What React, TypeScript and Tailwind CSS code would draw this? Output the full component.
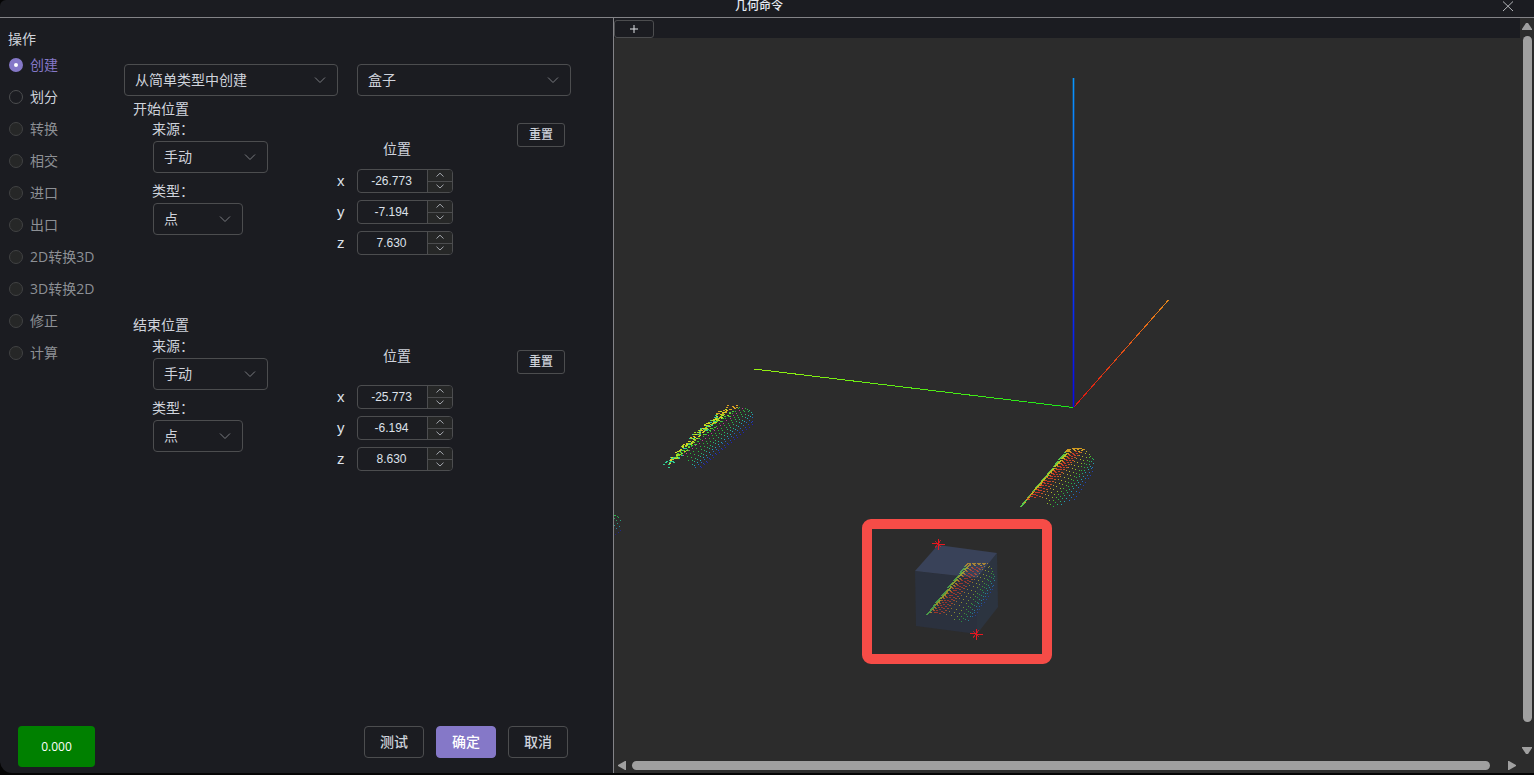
import { useState } from "react";
import type { ReactNode } from "react";

const FONT = 'font-["Open_Sans","Noto_Sans_CJK_SC",sans-serif]';

const OPERATIONS = [
  { id: "create", label: "创建", enabled: true },
  { id: "divide", label: "划分", enabled: true },
  { id: "convert", label: "转换", enabled: false },
  { id: "intersect", label: "相交", enabled: false },
  { id: "import", label: "进口", enabled: false },
  { id: "export", label: "出口", enabled: false },
  { id: "to3d", label: "2D转换3D", enabled: false },
  { id: "to2d", label: "3D转换2D", enabled: false },
  { id: "fix", label: "修正", enabled: false },
  { id: "compute", label: "计算", enabled: false },
];

function Select({ id, label, options, className }: { id: string; label?: string; options: string[]; className: string }) {
  return (
    <div className={`relative ${className}`}>
      <select
        id={id}
        aria-label={label}
        className="h-8 w-full appearance-none rounded border border-[#4c4d4f] bg-transparent pr-8 pl-2.5 text-sm text-[#cfd3dc] outline-none"
      >
        {options.map((o) => (
          <option key={o}>{o}</option>
        ))}
      </select>
      <svg className="pointer-events-none absolute top-[9px] right-[11px] size-[14px]" viewBox="0 0 14 14" fill="none" stroke="#797b80" aria-hidden="true">
        <path d="M2 4.5 7 9.5 12 4.5" />
      </svg>
    </div>
  );
}

function NumberField({ id, axis, value }: { id: string; axis: string; value: string }) {
  const [text, setText] = useState(value);
  const step = (by: number) => setText((Number(text) + by).toFixed(3));
  return (
    <div className="flex items-center">
      <label htmlFor={id} className="w-5 font-['Liberation_Sans',Arial,sans-serif] text-[15px] leading-6 text-[#dde1ea]">
        {axis}
      </label>
      <div className="flex h-6 w-24 overflow-hidden rounded border border-[#4c4d4f]">
        <input
          id={id}
          value={text}
          onChange={(e) => setText(e.target.value)}
          className="min-w-0 flex-1 bg-transparent pr-0.5 text-center font-['Liberation_Sans',Arial,sans-serif] text-xs text-[#dde1ea] outline-none"
        />
        <div className="flex w-[25px] flex-col border-l border-[#4c4d4f] bg-[#262727]">
          <button type="button" aria-label={`${axis} +`} onClick={() => step(1)} className="flex flex-1 items-center justify-center">
            <svg width="10" height="6" viewBox="0 0 10 6" fill="none" stroke="#a3a6ad">
              <path d="M1.5 4.5 5 1.2 8.5 4.5" />
            </svg>
          </button>
          <button type="button" aria-label={`${axis} -`} onClick={() => step(-1)} className="flex flex-1 items-center justify-center border-t border-[#4c4d4f]">
            <svg width="10" height="6" viewBox="0 0 10 6" fill="none" stroke="#a3a6ad">
              <path d="M1.5 0.7 5 4 8.5 0.7" />
            </svg>
          </button>
        </div>
      </div>
    </div>
  );
}

function PositionSection({ id, title, values, raised }: { id: string; title: string; values: string[]; raised?: boolean }) {
  return (
    <section className="h-[217px] pl-[9px]">
      <h2 className={`h-[21px] text-sm ${raised ? "leading-5" : "leading-[21px]"}`}>{title}</h2>
      <div className="flex items-start pl-5">
        <div className="w-[184px]">
          <label htmlFor={`${id}-source`} className="-ml-px mb-0.5 block h-5 text-sm leading-5">来源：</label>
          <Select id={`${id}-source`} options={["手动"]} className="w-[115px]" />
          <label htmlFor={`${id}-type`} className="mt-2 mb-0.5 -ml-px block h-5 text-sm leading-5">类型：</label>
          <Select id={`${id}-type`} options={["点"]} className="w-[90px]" />
        </div>
        <div className={raised ? "pt-2.5" : "pt-5"}>
          <div className={`pl-[46px] text-sm leading-5 ${raised ? "mb-[19px]" : "mb-2.5"}`}>位置</div>
          <div className="flex flex-col gap-[7px]">
            {["x", "y", "z"].map((axis, i) => (
              <NumberField key={axis} id={`${id}-${axis}`} axis={axis} value={values[i]} />
            ))}
          </div>
        </div>
        <button
          type="button"
          className={`ml-16 h-6 w-12 rounded-[3px] border border-[#4c4d4f] text-xs leading-[22px] font-medium text-[#cfd3dc] ${raised ? "mt-3.5" : "mt-1"}`}
        >
          重置
        </button>
      </div>
    </section>
  );
}

function ActionButton({ children, primary }: { children: ReactNode; primary?: boolean }) {
  return (
    <button
      type="button"
      className={`h-8 w-[60px] rounded border text-sm leading-[30px] font-medium ${
        primary ? "border-[#8578c8] bg-[#8578c8] text-white" : "border-[#4c4d4f] text-[#cfd3dc]"
      }`}
    >
      {children}
    </button>
  );
}

type Pt = [number, number];
type Shell = { front: Pt[]; back: Pt[]; colors: string[]; jitter: number; dense: number; bend: number };

const WARM = ["#60e050", "#d0e020", "#f0b020", "#f07020", "#e84020", "#e03828", "#e04028", "#e05828", "#e0a028", "#d8d028", "#a8d828", "#50d830", "#28d040", "#20d080", "#20b8d0", "#2080e0", "#2048d0"];
const COOL = ["#30e0a0", "#a8f020", "#f0f020", "#f8d818", "#d0f028", "#90e828", "#40e038", "#30c840", "#d838a8", "#28c838", "#28d048", "#28d070", "#20c8a0", "#20b8d0", "#2070d0", "#2040d0", "#2020c8"];

const SHELLS: Shell[] = [
  {
    front: [[665, 466], [668, 460], [674, 456], [683, 455], [690, 461], [693, 467], [701, 467]],
    back: [[721, 411], [728, 406], [735, 405], [742, 408], [749, 409], [752, 415], [752, 424]],
    colors: COOL, jitter: 4, dense: 7, bend: 1,
  },
  {
    front: [[1020, 506], [1025, 500], [1031, 497], [1042, 497], [1048, 505], [1057, 506], [1074, 499]],
    back: [[1067, 449], [1073, 448], [1079, 448], [1084, 449], [1090, 455], [1093, 460], [1092, 471]],
    colors: WARM, jitter: 0, dense: 8, bend: 0,
  },
  {
    front: [[926, 614], [931, 611], [936, 613], [946, 614], [957, 621], [965, 621], [975, 615]],
    back: [[967, 563], [973, 563], [980, 563], [987, 563], [992, 570], [994, 577], [992, 589]],
    colors: WARM, jitter: 0, dense: 8, bend: 0,
  },
];

function along(line: Pt[], u: number): Pt {
  const s = u * (line.length - 1);
  const i = Math.min(line.length - 2, Math.floor(s));
  const f = s - i;
  return [line[i][0] + (line[i + 1][0] - line[i][0]) * f, line[i][1] + (line[i + 1][1] - line[i][1]) * f];
}

function noise(n: number) {
  const v = Math.sin(n * 12.9898) * 43758.5453;
  return v - Math.floor(v);
}

function PointShell({ shell, opacity }: { shell: Shell; opacity: number }) {
  const dots: ReactNode[] = [];
  const rows = shell.colors.length;
  for (let r = 0; r < rows; r++) {
    const u = r / (rows - 1);
    const a = along(shell.front, u);
    const b = along(shell.back, u);
    const length = Math.hypot(b[0] - a[0], b[1] - a[1]);
    const gap = r < 2 ? 1.5 : r < shell.dense ? 3.2 : 4;
    const count = Math.round(length / gap);
    for (let k = 0; k <= count; k++) {
      const t = Math.min(1, (k + (r % 2) * 0.5) / count);
      const wobble = r < shell.dense ? (noise(r * 97 + k) - 0.5) * shell.jitter : 0;
      const lift = r < shell.dense ? Math.sin(t * 9) * shell.bend : 0;
      const fill = r < 2 && t < 0.16 ? shell.colors[0] : r < shell.dense && t > 0.94 ? "#f0b020" : shell.colors[r];
      dots.push(
        <rect
          key={`${r}-${k}`}
          x={Math.round(a[0] + (b[0] - a[0]) * t + wobble)}
          y={Math.round(a[1] + (b[1] - a[1]) * t + wobble + lift)}
          width={r < shell.dense ? 2 : 1}
          height="1"
          fill={fill}
        />,
      );
    }
  }
  return <g opacity={opacity}>{dots}</g>;
}

const STRAY: [number, number, string][] = [
  [614, 515, "#28b848"], [615, 515, "#28b848"], [617, 516, "#28a850"], [618, 517, "#28a850"], [614, 518, "#28a860"],
  [616, 520, "#28a060"], [620, 520, "#28a080"], [617, 523, "#289880"], [614, 525, "#28a090"], [619, 526, "#2088a0"],
  [616, 528, "#2078a0"], [620, 530, "#202890"], [618, 532, "#202890"], [615, 534, "#202080"],
];

function Marker({ x, y }: { x: number; y: number }) {
  return (
    <g stroke="#e81820" strokeWidth="1" shapeRendering="crispEdges">
      <path d={`M${x + 0.5} ${y - 5}v11M${x - 6} ${y - 0.5}h6M${x} ${y + 0.5}h7`} />
      <path d={`M${x - 3} ${y + 4}l6-8M${x - 3} ${y - 3}l6 6`} opacity="0.75" />
    </g>
  );
}

function Scene() {
  return (
    <svg className="block" width="906" height="720" viewBox="614 38 906 720" role="img" aria-label="3D">
      <defs>
        <linearGradient id="zAxis" gradientUnits="userSpaceOnUse" x1="1073" y1="78" x2="1073" y2="407">
          <stop offset="0" stopColor="#0898ff" />
          <stop offset="0.6" stopColor="#0838ff" />
          <stop offset="1" stopColor="#0808e8" />
        </linearGradient>
        <linearGradient id="yAxis" gradientUnits="userSpaceOnUse" x1="754" y1="369" x2="1073" y2="407">
          <stop offset="0" stopColor="#98f010" />
          <stop offset="1" stopColor="#18e818" />
        </linearGradient>
        <linearGradient id="xAxis" gradientUnits="userSpaceOnUse" x1="1074" y1="407" x2="1168" y2="300">
          <stop offset="0" stopColor="#e01010" />
          <stop offset="1" stopColor="#e88818" />
        </linearGradient>
      </defs>
      <g shapeRendering="crispEdges" fill="none">
        <path d="M754 369 1073 407.5" stroke="url(#yAxis)" />
        <path d="M1074 407 1168.5 300" stroke="url(#xAxis)" />
        <rect x="1072" y="78" width="3" height="329" fill="url(#zAxis)" opacity="0.3" />
        <rect x="1073" y="78" width="1" height="329" fill="url(#zAxis)" />
      </g>
      <path d="M915 571 977 578 977 634 916 626Z" fill="#2b313e" />
      <path d="M977 578 997 553 998 607 977 634Z" fill="#2c3440" />
      <path d="M938 545 997 553 977 578 915 571Z" fill="#394259" />
      <g shapeRendering="crispEdges">
        <PointShell shell={SHELLS[0]} opacity={0.9} />
        <PointShell shell={SHELLS[1]} opacity={0.85} />
        <PointShell shell={SHELLS[2]} opacity={0.6} />
        {STRAY.map(([x, y, fill]) => (
          <rect key={`${x}-${y}`} x={x} y={y} width="1" height="1" fill={fill} />
        ))}
      </g>
      <Marker x={938} y={544} />
      <Marker x={976} y={634} />
      <path
        fill="#f64c47"
        fillRule="evenodd"
        d="M871 519h172a9 9 0 0 1 9 9v127a9 9 0 0 1-9 9H871a9 9 0 0 1-9-9V528a9 9 0 0 1 9-9ZM872 529v125h170V529Z"
      />
    </svg>
  );
}

export default function App() {
  const [operation, setOperation] = useState("create");
  return (
    <div className={`flex h-screen flex-col overflow-hidden bg-[#050505] pb-0.5 text-[#cfd3dc] ${FONT}`}>
      <div role="dialog" aria-labelledby="dialog-title" className="flex min-h-0 flex-1 flex-col overflow-hidden rounded-tl-md rounded-bl-xl bg-[#1b1c21]">
        <header className="relative flex h-[18px] shrink-0 items-start justify-center border-b border-[#838387] pr-4">
          <h1 id="dialog-title" className="text-xs leading-[11px] font-medium text-[#e5eaf3]">几何命令</h1>
          <button type="button" aria-label="关闭" className="absolute top-0 right-5 flex size-3 items-center justify-center">
            <svg width="12" height="12" viewBox="0 0 12 12" stroke="#b4b6ba" fill="none">
              <path d="M1 1.5 11 11M11 1.5 1 11" />
            </svg>
          </button>
        </header>

        <div className="flex min-h-0 flex-1">
          <form className="flex w-[614px] shrink-0 flex-col border-r border-[#838387]" onSubmit={(e) => e.preventDefault()}>
            <div className="flex flex-1">
              <fieldset className="w-[124px] pl-2">
                <legend className="float-left mt-[11px] w-full text-sm leading-5">操作</legend>
                <div className="clear-both flex flex-col">
                  {OPERATIONS.map((op) => (
                    <label
                      key={op.id}
                      className={`flex h-8 items-center gap-[7px] pl-px text-sm ${
                        !op.enabled ? "text-[#8d9095]" : operation === op.id ? "text-[#8578c8]" : "text-[#cfd3dc]"
                      }`}
                    >
                      <input
                        type="radio"
                        name="operation"
                        disabled={!op.enabled}
                        checked={operation === op.id}
                        onChange={() => setOperation(op.id)}
                        className="size-[14px] shrink-0 appearance-none rounded-full border border-[#4c4d4f] checked:border-5 checked:border-[#8578c8] checked:bg-white disabled:border-[#414243] disabled:bg-[#262727]"
                      />
                      {op.label}
                    </label>
                  ))}
                </div>
              </fieldset>

              <div className="flex-1 pt-[46px]">
                <div className="mb-0.5 flex gap-[19px]">
                  <Select id="method" label="创建方式" options={["从简单类型中创建"]} className="w-[214px]" />
                  <Select id="shape" label="形状" options={["盒子"]} className="w-[214px]" />
                </div>
                <PositionSection id="start" title="开始位置" values={["-26.773", "-7.194", "7.630"]} />
                <PositionSection id="end" title="结束位置" values={["-25.773", "-6.194", "8.630"]} raised />
              </div>
            </div>

            <footer className="flex items-start justify-between pr-[45px] pb-1.5 pl-[18px]">
              <output className="flex h-[41px] w-[77px] items-center justify-center rounded bg-[#008000] text-xs text-white">0.000</output>
              <div className="flex gap-3">
                <ActionButton>测试</ActionButton>
                <ActionButton primary>确定</ActionButton>
                <ActionButton>取消</ActionButton>
              </div>
            </footer>
          </form>

          <main className="flex min-w-0 flex-1 flex-col bg-[#2c2c2c]">
            <div className="flex min-h-0 flex-1">
              <div className="flex min-w-0 flex-1 flex-col">
                <div className="flex h-5 shrink-0 items-end bg-[#1b1c21]">
                  <button type="button" className="flex h-[18px] w-10 items-center justify-center rounded-[3px] border border-[#4c4d4f]" aria-label="添加">
                    <svg width="8" height="8" viewBox="0 0 8 8" stroke="#e0e2e6" fill="none">
                      <path d="M4 0v8M0 4h8" />
                    </svg>
                  </button>
                </div>
                <div className="min-h-0 flex-1 overflow-hidden">
                  <Scene />
                </div>
              </div>
              <div className="flex w-[14px] flex-col items-center pt-[5px] pb-1">
                <svg width="10" height="7" viewBox="0 0 10 7" fill="#a0a0a0"><path d="M4 0h2l4 6v1H0V6Z" /></svg>
                <div className="mt-1.5 mb-[25px] w-[9px] flex-1 rounded-full bg-[#a0a0a0]" />
                <svg width="10" height="7" viewBox="0 0 10 7" fill="#a0a0a0"><path d="M0 0h10v1L6 7H4L0 1Z" /></svg>
              </div>
            </div>
            <div className="flex h-[15px] shrink-0 items-center pr-[18px] pl-1">
              <svg width="8" height="9" viewBox="0 0 8 9" fill="#a0a0a0"><path d="M7 0h1v9H7L0 5V4Z" /></svg>
              <div className="mr-[18px] ml-1.5 h-[9px] flex-1 rounded-full bg-[#a0a0a0]" />
              <svg width="8" height="9" viewBox="0 0 8 9" fill="#a0a0a0"><path d="M0 0h1l7 4v1L1 9H0Z" /></svg>
            </div>
          </main>
        </div>
      </div>
    </div>
  );
}
